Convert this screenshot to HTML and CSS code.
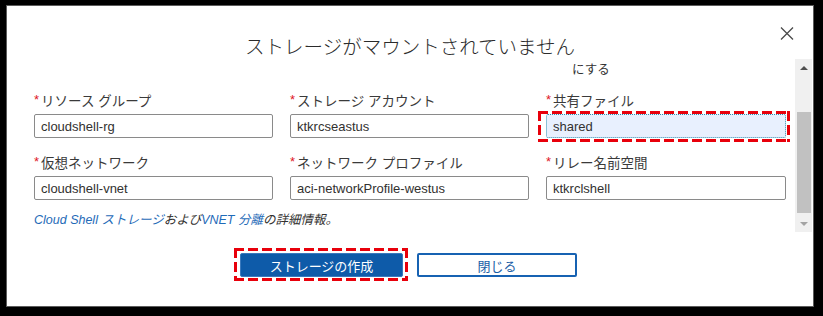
FILE: index.html
```html
<html>
    <head>
        <meta charset="UTF-8">
        <link rel="stylesheet" href="styles.css">
    </head>

    <body>
        <div class="dialog">
            <div class="header">
                <div></div>
                <h1 class="title">ストレージがマウントされていません</h1>
                <button class="close" aria-label="閉じる">
                    <svg width="14" height="13" viewBox="0 0 14 13">
                        <path d="M1 0.5 L13 12.5 M13 0.5 L1 12.5" stroke="#4a4a4a" stroke-width="1.3" fill="none"/>
                    </svg>
                </button>
            </div>

            <div class="body">
                <div class="form">
                    <div class="note">にする</div>

                    <div class="fields">
                        <div class="field">
                            <label><span class="req">*</span>リソース グループ</label>
                            <input class="input" value="cloudshell-rg">
                        </div>
                        <div class="field">
                            <label><span class="req">*</span>ストレージ アカウント</label>
                            <input class="input" value="ktkrcseastus">
                        </div>
                        <div class="field">
                            <label><span class="req">*</span>共有ファイル</label>
                            <div class="marked marked-field">
                                <input class="input filled" value="shared">
                            </div>
                        </div>
                        <div class="field">
                            <label><span class="req">*</span>仮想ネットワーク</label>
                            <input class="input" value="cloudshell-vnet">
                        </div>
                        <div class="field">
                            <label><span class="req">*</span>ネットワーク プロファイル</label>
                            <input class="input" value="aci-networkProfile-westus">
                        </div>
                        <div class="field">
                            <label><span class="req">*</span>リレー名前空間</label>
                            <input class="input" value="ktkrclshell">
                        </div>
                    </div>

                    <p class="info">
                        <a href="#">Cloud Shell ストレージ</a>および<a href="#">VNET 分離</a>の詳細情報。
                    </p>
                </div>

                <div class="scrollbar">
                    <div class="arrow up"></div>
                    <div class="track">
                        <div class="thumb"></div>
                    </div>
                    <div class="arrow down"></div>
                </div>
            </div>

            <div class="footer">
                <div class="marked marked-button">
                    <button class="btn primary">ストレージの作成</button>
                </div>
                <button class="btn secondary">閉じる</button>
            </div>
        </div>
    </body>
</html>
```

FILE: styles.css
```css
body {
    margin: 0;
    padding: 5px 9px 0 6px;
    background: #000;
    font-family: "Liberation Sans", "Noto Sans CJK JP", sans-serif;
    color: #323130;
}

.dialog {
    width: 808px;
    height: 302px;
    box-sizing: border-box;
    background: #fff;
    border: 1px solid #5c5c5c;
    display: flex;
    flex-direction: column;
}

.header {
    height: 53px;
    display: grid;
    grid-template-columns: 1fr auto 1fr;
    align-items: start;
}

.title {
    margin: 0;
    padding-top: 28px;
    font-size: 19.5px;
    line-height: 24px;
    font-weight: 300;
    color: #2b2b2b;
    font-family: "Noto Sans CJK JP", sans-serif;
}

.close {
    justify-self: end;
    margin: 21px 19px 0 0;
    padding: 0;
    border: none;
    background: none;
    line-height: 0;
}

.body {
    height: 173px;
    display: flex;
}

.form {
    flex: 1;
    padding: 0 9px 0 27px;
}

.note {
    margin: 2px 0 0 538px;
    font-size: 12.5px;
    line-height: 16px;
    font-family: "Noto Sans CJK JP", sans-serif;
    color: #333;
}

.fields {
    margin-top: 15px;
    display: grid;
    grid-template-columns: 239px 239px 240px;
    column-gap: 17px;
    row-gap: 16px;
}

.field label {
    display: block;
    height: 20px;
    margin-bottom: 2px;
    font-size: 13.5px;
    line-height: 20px;
    color: #3a3a3a;
}

.req {
    color: #e0191f;
    font-size: 13px;
    margin-right: 2px;
    position: relative;
    top: -2px;
}

.input {
    display: block;
    width: 100%;
    height: 24px;
    box-sizing: border-box;
    border: 1px solid #8a8a8a;
    border-radius: 2px;
    padding: 0 6px;
    font-family: "Liberation Sans", sans-serif;
    font-size: 13px;
    color: #323130;
    background: #fff;
}

.input.filled {
    background: #e8f0fe;
    border: 1px dotted #2f8fb0;
}

/* red dashed frame drawn with gradients so the dashes are long */
.marked {
    background:
        repeating-linear-gradient(90deg, #e8000b 0 10px, transparent 10px 14px) left top / 100% 3px no-repeat,
        repeating-linear-gradient(90deg, #e8000b 0 10px, transparent 10px 14px) left bottom / 100% 3px no-repeat,
        repeating-linear-gradient(180deg, #e8000b 0 10px, transparent 10px 14px) left top / 3px 100% no-repeat,
        repeating-linear-gradient(180deg, #e8000b 0 10px, transparent 10px 14px) right top / 3px 100% no-repeat;
}

.marked-field {
    margin: -3px -4px -4px -8px;
    padding: 3px 4px 4px 8px;
}

.marked-button {
    margin: -5px -5px -4px -6px;
    padding: 5px 5px 4px 6px;
    line-height: 0;
}

.info {
    margin: 11px 0 0 0;
    font-size: 12.5px;
    line-height: 18px;
    font-style: italic;
    color: #323130;
}

.info a {
    color: #1f6bb8;
    text-decoration: none;
}

.scrollbar {
    width: 17px;
    margin-right: 1px;
    background: #f0f0f0;
    display: flex;
    flex-direction: column;
}

.arrow {
    height: 17px;
    display: flex;
    align-items: center;
    justify-content: center;
}

.arrow::after {
    content: "";
    border-left: 4px solid transparent;
    border-right: 4px solid transparent;
}

.arrow.up::after {
    border-bottom: 4px solid #505050;
}

.arrow.down::after {
    border-top: 4px solid #a3a3a3;
}

.track {
    flex: 1;
    padding: 36px 1px 2px 2px;
}

.thumb {
    height: 101px;
    background: #c1c1c1;
}

.footer {
    display: flex;
    justify-content: center;
    align-items: flex-start;
    gap: 14px;
    padding: 21px 3px 0 0;
}

.btn {
    height: 24px;
    border-radius: 2px;
    font-family: "Noto Sans CJK JP", sans-serif;
    font-size: 13px;
    padding: 0;
}

.primary {
    width: 163px;
    background: #0e5ba9;
    border: 1px solid #3a79bd;
    color: #fff;
}

.secondary {
    width: 160px;
    background: #fff;
    border: 2px solid #1762b2;
    color: #1a5ea6;
}
```
